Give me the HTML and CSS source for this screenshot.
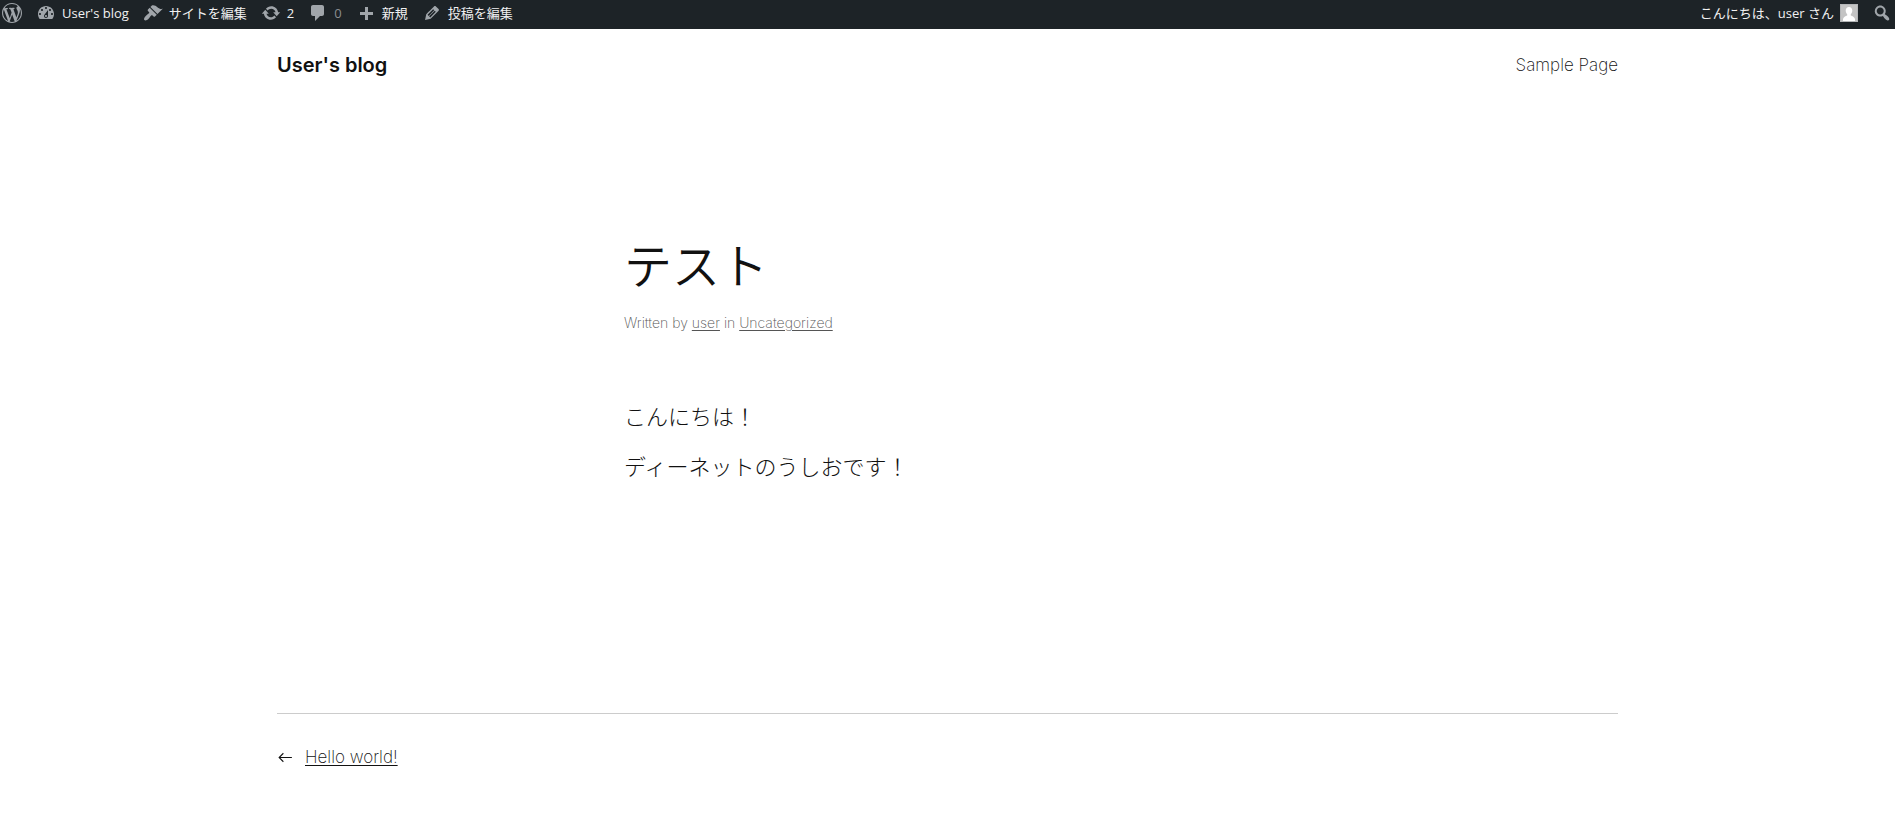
FILE: index.html
```
<!DOCTYPE html>
<html lang="ja">
<head>
    <meta charset="UTF-8">
    <meta name="viewport" content="width=device-width, initial-scale=1.0">
    <title>テスト – User's blog</title>
    <link rel="stylesheet" href="styles.css">
</head>
<body>
    <nav class="adminbar" aria-label="ツールバー">
        <a class="bar-item" href="#" aria-label="WordPress">
            <svg class="icon" viewBox="0 0 20 20"><path d="M20 10c0-5.51-4.49-10-10-10C4.48 0 0 4.49 0 10c0 5.52 4.48 10 10 10 5.51 0 10-4.48 10-10zM7.78 15.37L4.37 6.22c.55-.02 1.17-.08 1.17-.08.5-.06.44-1.13-.06-1.11 0 0-1.45.11-2.37.11-.18 0-.37 0-.58-.01C4.12 2.69 6.87 1.11 10 1.11c2.33 0 4.45.87 6.05 2.34-.68-.11-1.65.39-1.65 1.58 0 .74.45 1.36.9 2.1.35.61.55 1.36.55 2.46 0 1.49-1.4 5-1.4 5l-3.03-8.37c.54-.02.82-.17.82-.17.5-.05.44-1.25-.06-1.22 0 0-1.44.12-2.38.12-.87 0-2.33-.12-2.33-.12-.5-.03-.56 1.2-.06 1.22l.92.08 1.26 3.41zM17.41 10c.24-.64.74-1.87.43-4.25.7 1.29 1.05 2.71 1.05 4.25 0 3.29-1.73 6.24-4.4 7.78.97-2.59 1.94-5.2 2.92-7.78zM6.1 18.09C3.12 16.65 1.11 13.53 1.11 10c0-1.3.23-2.48.72-3.59C3.25 10.3 4.67 14.2 6.1 18.09zm4.03-6.63l2.58 6.98c-.86.29-1.76.45-2.71.45-.79 0-1.57-.11-2.29-.33.81-2.38 1.62-4.74 2.42-7.1z"/></svg>
        </a>
        <a class="bar-item" href="#">
            <svg class="icon" viewBox="0 0 20 20"><path fill-rule="evenodd" d="M3.76 16h12.48c1.1-1.37 1.76-3.11 1.76-5 0-4.42-3.58-8-8-8s-8 3.58-8 8c0 1.89.66 3.63 1.76 5zM10 4c.55 0 1 .45 1 1s-.45 1-1 1-1-.45-1-1 .45-1 1-1zM6 6c.55 0 1 .45 1 1s-.45 1-1 1-1-.45-1-1 .45-1 1-1zm8 0c.55 0 1 .45 1 1s-.45 1-1 1-1-.45-1-1 .45-1 1-1zm-5.37 5.55L12 7v6c0 1.1-.9 2-2 2s-2-.9-2-2c0-.57.24-1.08.63-1.45zM4 10c.55 0 1 .45 1 1s-.45 1-1 1-1-.45-1-1 .45-1 1-1zm12 0c.55 0 1 .45 1 1s-.45 1-1 1-1-.45-1-1 .45-1 1-1zm-5 3c0-.55-.45-1-1-1s-1 .45-1 1 .45 1 1 1 1-.45 1-1z"/></svg>
            <span>User's blog</span>
        </a>
        <a class="bar-item" href="#">
            <svg class="icon" viewBox="0 0 20 20"><path d="M14.48 11.06L7.41 3.99l1.5-1.5c.5-.56 2.3-.47 3.51.32 1.21.8 1.43 1.28 2.91 2.1 1.18.64 2.45 1.26 4.45.85zm-.71.71L6.7 4.7 4.93 6.47c-.39.39-.39 1.02 0 1.41l1.06 1.06c.39.39.39 1.03 0 1.42-.6.6-1.43 1.11-2.21 1.69-.35.26-.7.53-1.01.84C1.43 14.23.4 16.08 1.4 17.07c.99 1 2.84-.03 4.18-1.36.31-.31.58-.66.85-1.02.57-.78 1.08-1.61 1.69-2.21.39-.39 1.02-.39 1.41 0l1.06 1.06c.39.39 1.02.39 1.41 0z"/></svg>
            <span>サイトを編集</span>
        </a>
        <a class="bar-item" href="#">
            <svg class="icon" viewBox="0 0 20 20"><path d="M10.2 3.28c3.53 0 6.43 2.61 6.92 6h2.08l-3.5 4-3.5-4h2.32c-.45-1.97-2.21-3.45-4.32-3.45-1.45 0-2.73.71-3.54 1.78L4.95 5.66C6.23 4.2 8.11 3.28 10.2 3.28zm-.4 13.44c-3.52 0-6.43-2.61-6.92-6H.8l3.5-4c1.17 1.33 2.33 2.67 3.5 4H5.48c.45 1.97 2.21 3.45 4.32 3.45 1.45 0 2.73-.71 3.54-1.78l1.71 1.95c-1.28 1.46-3.15 2.38-5.25 2.38z"/></svg>
            <span>2</span>
        </a>
        <a class="bar-item" href="#">
            <svg class="icon" viewBox="0 0 20 20"><path d="M5 2h9c1.1 0 2 .9 2 2v7c0 1.1-.9 2-2 2h-2l-5 5v-5H5c-1.1 0-2-.9-2-2V4c0-1.1.9-2 2-2z"/></svg>
            <span class="count-zero">0</span>
        </a>
        <a class="bar-item" href="#">
            <svg class="icon" viewBox="0 0 20 20"><path d="M17 9v3h-5v5H9v-5H4V9h5V4h3v5h5z"/></svg>
            <span>新規</span>
        </a>
        <a class="bar-item" href="#">
            <svg class="icon" viewBox="0 0 20 20"><path d="M13.89 3.39l2.71 2.72c.46.46.42 1.24.03 1.64l-8.01 8.02-5.56 1.16 1.16-5.58s7.6-7.63 7.99-8.03c.39-.39 1.22-.39 1.68.07zm-2.73 2.79l-5.59 5.61 1.11 1.11 5.54-5.65zm-2.97 8.23l5.58-5.6-1.07-1.08-5.59 5.6z"/></svg>
            <span>投稿を編集</span>
        </a>
        <a class="bar-item account" href="#">
            <span>こんにちは、user さん</span>
            <svg class="avatar" viewBox="0 0 16 16"><path fill="#c4c4c4" d="M0 0h16v16H0z"/><path fill="#fff" d="M8 2c2 0 3.3 1.5 3.3 3.6 0 1.5-.6 2.9-1.5 3.6v1.2c1.8.6 3.7 1.5 4.2 3.6V16H2v-2c.5-2.1 2.4-3 4.2-3.6V9.2C5.3 8.5 4.7 7.1 4.7 5.6 4.7 3.5 6 2 8 2z"/></svg>
        </a>
        <a class="bar-item" href="#" aria-label="検索">
            <svg class="icon" viewBox="0 0 20 20"><path d="M12.14 4.18c1.87 1.87 2.11 4.75.72 6.89.12.1.22.21.36.31.2.16.47.36.81.59.34.24.56.39.66.47.42.31.73.57.94.78.32.32.6.65.84 1 .25.35.44.69.59 1.04.14.35.21.68.18 1-.02.32-.14.59-.36.81s-.49.34-.81.36c-.31.02-.65-.04-.99-.19-.35-.14-.7-.34-1.04-.59-.35-.24-.68-.52-1-.84-.21-.21-.47-.52-.77-.93-.1-.13-.25-.35-.47-.66-.22-.32-.4-.57-.56-.78-.16-.2-.29-.35-.44-.5-2.07 1.09-4.69.76-6.44-.98-2.14-2.15-2.14-5.64 0-7.78 2.15-2.15 5.63-2.15 7.78 0zm-1.41 6.36c1.36-1.37 1.36-3.58 0-4.95-1.37-1.37-3.59-1.37-4.95 0-1.37 1.37-1.37 3.58 0 4.95 1.36 1.37 3.58 1.37 4.95 0z"/></svg>
        </a>
    </nav>

    <header class="wide site-header">
        <a class="site-title" href="#">User's blog</a>
        <a class="nav-link" href="#">Sample Page</a>
    </header>

    <main>
        <article class="post">
            <h1>テスト</h1>
            <p class="meta">Written by <a href="#">user</a> in <a href="#">Uncategorized</a></p>
            <div class="content">
                <p>こんにちは！</p>
                <p>ディーネットのうしおです！</p>
            </div>
        </article>
        <nav class="wide post-nav" aria-label="投稿">
            <svg class="arrow" viewBox="0 0 16 16"><path d="M14 8H2M6 4L2 8l4 4"/></svg>
            <a href="#">Hello world!</a>
        </nav>
    </main>
</body>
</html>
```
FILE: styles.css
```
* {
    box-sizing: border-box;
}
body {
    margin: 0;
    background: #fff;
    color: #111;
    font-family: Inter, "Noto Sans CJK JP", sans-serif;
    font-size: 17px;
    font-weight: 200;
    line-height: 28px;
}
a {
    color: inherit;
    text-underline-offset: 2px;
}

/* admin bar */
.adminbar {
    display: flex;
    align-items: center;
    gap: 14px;
    height: 29px;
    padding: 0 3px 3px 2px;
    background: #1d2327;
    color: #f0f0f1;
    font-family: "Open Sans", "Noto Sans CJK JP", sans-serif;
    font-size: 13px;
    font-weight: 400;
    line-height: 26px;
    white-space: nowrap;
}
.bar-item {
    display: flex;
    align-items: center;
    gap: 6px;
    text-decoration: none;
}
.icon {
    width: 20px;
    height: 20px;
    fill: #a0a5aa;
}
.count-zero {
    color: #8b8e91;
}
.account {
    margin-left: auto;
}
.avatar {
    width: 18px;
    height: 18px;
    border: 1px solid #b4b6b8;
}

/* page */
.wide {
    max-width: 1341px;
    margin: 0 auto;
}
.site-header {
    display: flex;
    justify-content: space-between;
    align-items: center;
    padding: 20px 0;
}
.site-title {
    font-size: 20px;
    font-weight: 600;
    line-height: 32px;
    text-decoration: none;
}
.nav-link {
    text-decoration: none;
}
.post {
    max-width: 647px;
    margin: 0 auto;
    padding: 138px 0 211px;
}
h1 {
    margin: 0;
    font-size: 48px;
    font-weight: 350;
    line-height: 56px;
}
.meta {
    margin: 16px 0 0;
    color: #555;
    font-size: 14px;
    line-height: 24px;
}
.content {
    padding-top: 67px;
    font-size: 22px;
    font-weight: 300;
    line-height: 30px;
}
.content p {
    margin: 0 0 20px;
}
.post-nav {
    display: flex;
    align-items: center;
    gap: 11px;
    padding: 29px 0;
    border-top: 1px solid #ccc;
}
.arrow {
    width: 17px;
    height: 17px;
    fill: none;
    stroke: #111;
}
```
